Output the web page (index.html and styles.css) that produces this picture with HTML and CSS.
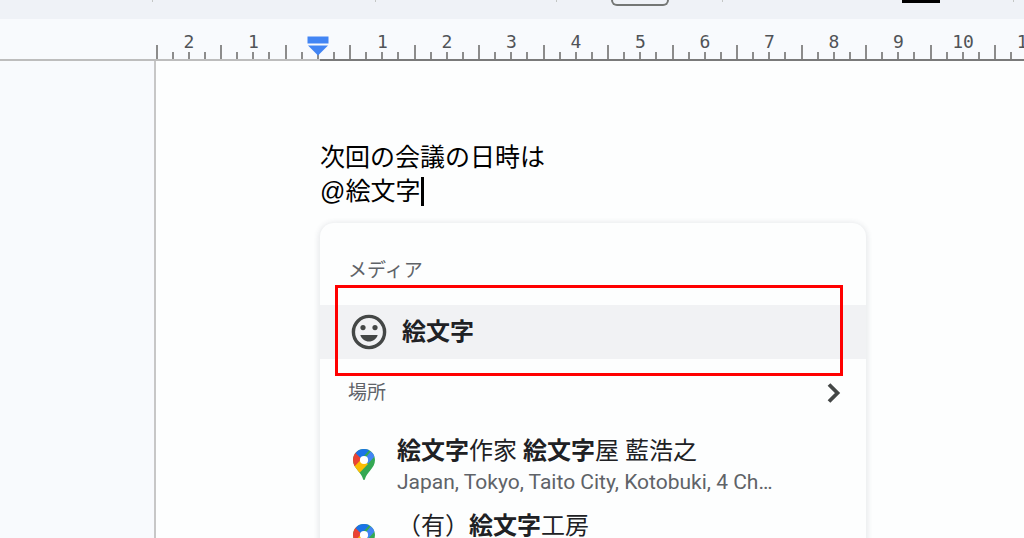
FILE: index.html
```
<!DOCTYPE html>
<html lang="ja">
<head>
    <meta charset="UTF-8">
    <meta name="viewport" content="width=device-width, initial-scale=1.0">
    <title>ドキュメント</title>
    <link rel="stylesheet" href="styles.css">
</head>
<body>
    <header class="toolbar">
        <div class="tool-group group-menu"></div>
        <div class="tool-group group-style"></div>
        <div class="tool-group group-font"></div>
        <div class="tool-group group-size">
            <input class="size-box" type="text" aria-label="フォントサイズ">
        </div>
        <div class="tool-group group-color">
            <button class="color-button" type="button" aria-label="テキストの色"></button>
        </div>
    </header>

    <div class="ruler">
        <div class="ruler-scale">
            <span class="unit">2</span>
            <span class="unit">1</span>
            <span class="unit"></span>
            <span class="unit">1</span>
            <span class="unit">2</span>
            <span class="unit">3</span>
            <span class="unit">4</span>
            <span class="unit">5</span>
            <span class="unit">6</span>
            <span class="unit">7</span>
            <span class="unit">8</span>
            <span class="unit">9</span>
            <span class="unit">10</span>
            <span class="unit">11</span>
        </div>
        <svg class="indent-marker" width="22" height="20" viewBox="0 0 22 20">
            <path d="M.5 .5h21v7H.5z" fill="#4285f4"/>
            <path d="M1 9.5h20L11 19.5z" fill="#4285f4"/>
        </svg>
    </div>

    <main class="workspace">
        <div class="page">
            <p class="line">次回の会議の日時は</p>
            <p class="line line-active">@絵文字<span class="caret"></span></p>

            <div class="popup">
                <h2 class="section-title">メディア</h2>
                <button class="emoji-row" type="button">
                    <svg class="smiley" width="36" height="36" viewBox="0 0 36 36">
                        <circle cx="18" cy="18" r="15.6" fill="none" stroke="#444746" stroke-width="3.4"/>
                        <circle cx="12" cy="13.6" r="2.6" fill="#444746"/>
                        <circle cx="24" cy="13.6" r="2.6" fill="#444746"/>
                        <path d="M9.3 21h17.4c-1.300 4-4.700 6.500-8.700 6.500S10.600 25 9.300 21z" fill="#444746"/>
                    </svg>
                    <b>絵文字</b>
                </button>
                <div class="highlight"></div>

                <div class="section-head">
                    <h2 class="section-title">場所</h2>
                    <button class="more" type="button" aria-label="場所をもっと見る">
                        <svg width="14" height="22" viewBox="0 0 14 22">
                            <path d="M2 2.500L10.500 11L2 19.500" fill="none" stroke="#444746" stroke-width="3.800"/>
                        </svg>
                    </button>
                </div>

                <svg class="defs" width="0" height="0">
                    <defs>
                        <clipPath id="pin-shape">
                            <path d="M11 0C4.900 0 0 4.900 0 11c0 4.500 2.200 7.300 4.800 10.400 2.600 3 4.300 5.300 5.200 8.600.5 1.400 1.500 1.400 2 0 .9-3.300 2.600-5.600 5.200-8.600C19.800 18.300 22 15.500 22 11 22 4.900 17.100 0 11 0z"/>
                        </clipPath>
                        <symbol id="pin" viewBox="0 0 22 31">
                            <g clip-path="url(#pin-shape)">
                                <path d="M0 0h22v31H0z" fill="#34a853"/>
                                <path d="M-1 18L8 8l7 7L3.500 27z" fill="#fbbc04"/>
                                <path d="M-2 0H3l7 8.500L-1 20z" fill="#ea4335"/>
                                <path d="M2.500 4L8 -2h11l-8 9-3.500 2z" fill="#1a73e8"/>
                                <path d="M18.500 1.500L11 10.500l4 4.200L23 6z" fill="#4285f4"/>
                            </g>
                            <circle cx="11" cy="11" r="4.100" fill="#fff"/>
                        </symbol>
                    </defs>
                </svg>

                <a class="place" href="#">
                    <svg class="pin" width="22" height="31"><use href="#pin"/></svg>
                    <span class="place-text">
                        <span class="place-name"><b>絵文字</b>作家 <b>絵文字</b>屋 藍浩之</span>
                        <span class="place-address">Japan, Tokyo, Taito City, Kotobuki, 4 Ch…</span>
                    </span>
                </a>
                <a class="place" href="#">
                    <svg class="pin" width="22" height="31"><use href="#pin"/></svg>
                    <span class="place-text">
                        <span class="place-name">（有）<b>絵文字</b>工房</span>
                    </span>
                </a>
            </div>
        </div>
    </main>
</body>
</html>
```

FILE: styles.css
```
* {
    box-sizing: border-box;
}

body {
    margin: 0;
    height: 100vh;
    display: flex;
    flex-direction: column;
    overflow: hidden;
    background: #f8fafd;
    font-family: Roboto, "Noto Sans CJK JP", sans-serif;
    color: #202124;
}

button {
    padding: 0;
    border: none;
    background: none;
    font: inherit;
    color: inherit;
    cursor: pointer;
}

/* Toolbar */
.toolbar {
    flex: none;
    display: flex;
    height: 19px;
    background: #eff2f7;
}

.tool-group {
    flex: none;
    height: 2px;
    border-right: 1px solid #c4c7c5;
}

.group-menu {
    width: 153px;
}

.group-style {
    width: 223px;
}

.group-font {
    width: 181px;
}

.group-size {
    display: flex;
    justify-content: center;
    width: 166px;
}

.group-color {
    display: flex;
    justify-content: flex-end;
    width: 291px;
    padding-right: 73px;
}

.size-box {
    width: 58px;
    height: 6px;
    padding: 0;
    border: 2px solid #747775;
    border-top: none;
    border-radius: 0 0 6px 6px;
    background: transparent;
}

.color-button {
    width: 38px;
    height: 3px;
    background: #000000;
}

/* Ruler */
.ruler {
    flex: none;
    position: relative;
    height: 42px;
    padding: 0 0 2px 156px;
    overflow: hidden;
    background: linear-gradient(to right, #bdbdbd 320px, #7a7a7a 320px) bottom / 100% 2px no-repeat;
}

.ruler-scale {
    display: grid;
    grid-template-columns: repeat(7, 64px 65px);
    height: 40px;
}

.unit {
    padding: 11px 0 0 2px;
    text-align: center;
    font-family: "DejaVu Sans Mono", monospace;
    font-size: 18px;
    line-height: 24px;
    color: #505357;
    background-image:
        linear-gradient(#8c8c8c, #8c8c8c),
        linear-gradient(#8c8c8c, #8c8c8c),
        linear-gradient(#8c8c8c, #8c8c8c),
        linear-gradient(#8c8c8c, #8c8c8c);
    background-size: 2px 14px, 2px 7px, 2px 7px, 2px 7px;
    background-position: 0 100%, 16px 100%, 32px 100%, 48px 100%;
    background-repeat: no-repeat;
}

.indent-marker {
    position: absolute;
    left: 307px;
    top: 17px;
}

/* Document */
.workspace {
    flex: 1;
    min-height: 0;
    padding-left: 154px;
}

.page {
    height: 100%;
    padding: 79px 0 0 164px;
    border-left: 2px solid #c7c7c7;
    background: #fdfefe;
}

.line {
    margin: 0;
    font-family: "Liberation Sans", "Noto Sans CJK JP", sans-serif;
    font-size: 25px;
    line-height: 34px;
    height: 34px;
    color: #000000;
}

.line-active {
    display: flex;
    gap: 1px;
}

.caret {
    width: 3px;
    height: 29px;
    margin-top: 3px;
    background: #000000;
}

/* Suggestion popup */
.popup {
    position: absolute;
    width: 546px;
    margin-top: 15px;
    padding-top: 34px;
    border-radius: 14px;
    background: #fdfefe;
    box-shadow: 0 1px 5px 2px rgba(60, 64, 90, 0.1);
}

.section-title {
    margin: 0;
    padding-left: 28px;
    font-size: 19px;
    font-weight: 400;
    line-height: 28px;
    color: #5f6368;
}

.emoji-row {
    display: flex;
    align-items: center;
    gap: 15px;
    width: 100%;
    height: 54px;
    margin-top: 20px;
    padding-left: 31px;
    background: #f1f2f4;
    font-size: 24px;
}

.emoji-row b {
    padding-bottom: 6px;
}

.highlight {
    position: absolute;
    left: 15px;
    top: 62px;
    width: 508px;
    height: 91px;
    border: 3px solid #ff0000;
    pointer-events: none;
}

.section-head {
    display: flex;
    align-items: center;
    justify-content: space-between;
    margin: 20px 0 21px;
    padding-right: 25px;
}

.more {
    display: flex;
}

.defs {
    position: absolute;
}

.place {
    display: flex;
    gap: 22px;
    height: 75px;
    padding: 7px 33px;
    color: inherit;
    text-decoration: none;
}

.pin {
    flex: none;
    margin-top: 14px;
}

.place-text {
    display: flex;
    flex-direction: column;
    white-space: nowrap;
}

.place-name {
    font-size: 24px;
    line-height: 32px;
}

.place-address {
    font-size: 21px;
    line-height: 30px;
    color: #5f6368;
}
```
